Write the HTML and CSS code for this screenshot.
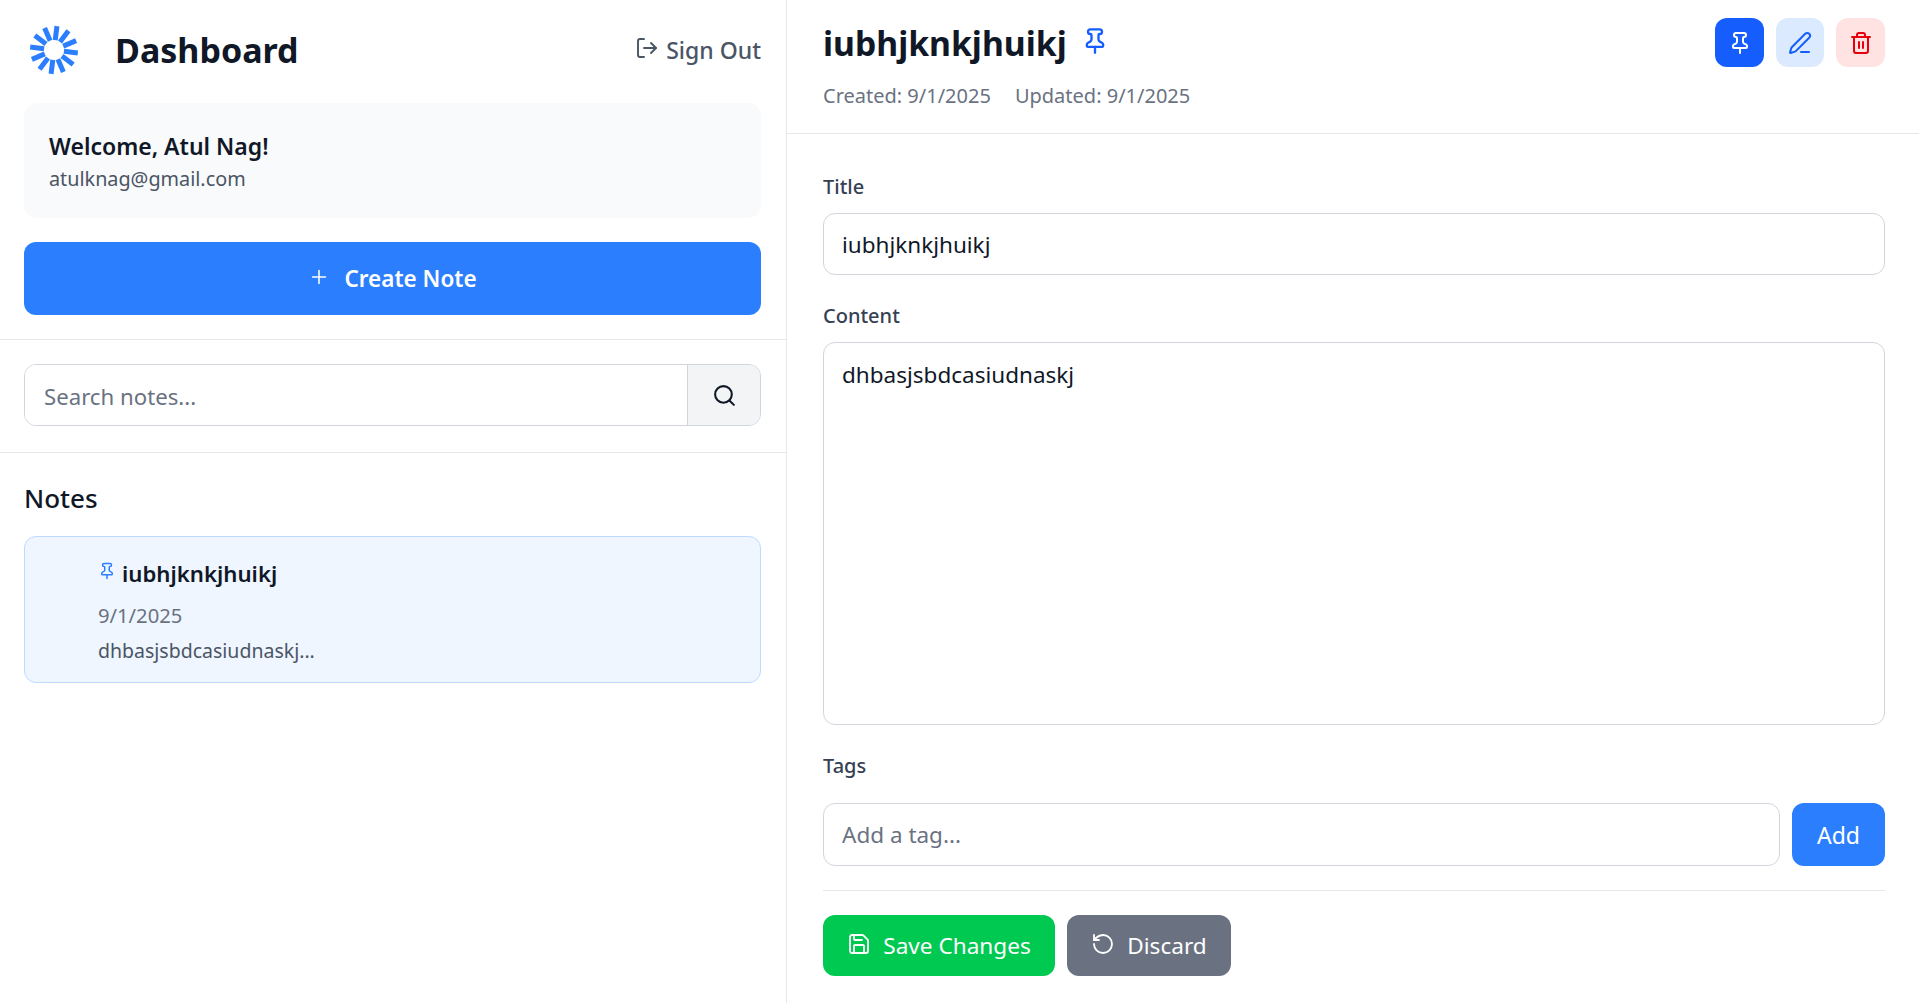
FILE: index.html
```html
<!DOCTYPE html>
<html lang="en">

<head>
    <meta charset="utf-8">
    <title>Dashboard</title>
    <link rel="stylesheet" href="styles.css">
</head>

<body>
    <div class="app">
        <aside class="sidebar">
            <section class="side-top">
                <div class="brand-row">
                    <svg class="logo" viewBox="0 0 50 50" fill="none" stroke="#2b7fff" stroke-width="5">
                        <path transform="rotate(7 25 25)" d="M25 1v14"/>
                        <path transform="rotate(37 25 25)" d="M25 1v14"/>
                        <path transform="rotate(67 25 25)" d="M25 1v14"/>
                        <path transform="rotate(97 25 25)" d="M25 1v14"/>
                        <path transform="rotate(127 25 25)" d="M25 1v14"/>
                        <path transform="rotate(157 25 25)" d="M25 1v14"/>
                        <path transform="rotate(187 25 25)" d="M25 1v14"/>
                        <path transform="rotate(217 25 25)" d="M25 1v14"/>
                        <path transform="rotate(247 25 25)" d="M25 1v14"/>
                        <path transform="rotate(277 25 25)" d="M25 1v14"/>
                        <path transform="rotate(307 25 25)" d="M25 1v14"/>
                        <path transform="rotate(337 25 25)" d="M25 1v14"/>
                    </svg>
                    <h1 class="brand">Dashboard</h1>
                    <a class="sign-out" href="#">
                        <svg class="icon" viewBox="0 0 24 24"><path d="M9 21H5a2 2 0 0 1-2-2V5a2 2 0 0 1 2-2h4"/><path d="m16 17 5-5-5-5"/><path d="M21 12H9"/></svg>
                        Sign Out
                    </a>
                </div>
                <div class="welcome">
                    <h2>Welcome, Atul Nag!</h2>
                    <p>atulknag@gmail.com</p>
                </div>
                <button class="btn btn-create">
                    <svg class="icon" viewBox="0 0 24 24"><path d="M5 12h14"/><path d="M12 5v14"/></svg>
                    Create Note
                </button>
            </section>

            <section class="side-search">
                <div class="search">
                    <input type="text" placeholder="Search notes...">
                    <button class="search-btn">
                        <svg class="icon" viewBox="0 0 24 24"><circle cx="11" cy="11" r="8"/><path d="m21 21-4.3-4.3"/></svg>
                    </button>
                </div>
            </section>

            <section class="side-notes">
                <h2>Notes</h2>
                <div class="note-card">
                    <div class="note-title">
                        <svg class="icon pin-small" viewBox="0 0 24 24"><path d="M12 17v5"/><path d="M9 10.76a2 2 0 0 1-1.11 1.79l-1.78.9A2 2 0 0 0 5 15.24V16a1 1 0 0 0 1 1h12a1 1 0 0 0 1-1v-.76a2 2 0 0 0-1.11-1.79l-1.78-.9A2 2 0 0 1 15 10.76V7a1 1 0 0 1 1-1 2 2 0 0 0 0-4H8a2 2 0 0 0 0 4 1 1 0 0 1 1 1z"/></svg>
                        iubhjknkjhuikj
                    </div>
                    <p class="note-date">9/1/2025</p>
                    <p class="note-text">dhbasjsbdcasiudnaskj...</p>
                </div>
            </section>
        </aside>

        <main class="editor">
            <header class="editor-head">
                <div>
                    <div class="editor-title">
                        <h1>iubhjknkjhuikj</h1>
                        <svg class="icon pin-big" viewBox="0 0 24 24"><path d="M12 17v5"/><path d="M9 10.76a2 2 0 0 1-1.11 1.79l-1.78.9A2 2 0 0 0 5 15.24V16a1 1 0 0 0 1 1h12a1 1 0 0 0 1-1v-.76a2 2 0 0 0-1.11-1.79l-1.78-.9A2 2 0 0 1 15 10.76V7a1 1 0 0 1 1-1 2 2 0 0 0 0-4H8a2 2 0 0 0 0 4 1 1 0 0 1 1 1z"/></svg>
                    </div>
                    <div class="dates">
                        <span>Created: 9/1/2025</span>
                        <span>Updated: 9/1/2025</span>
                    </div>
                </div>
                <div class="actions">
                    <button class="square pin-on">
                        <svg class="icon" viewBox="0 0 24 24"><path d="M12 17v5"/><path d="M9 10.76a2 2 0 0 1-1.11 1.79l-1.78.9A2 2 0 0 0 5 15.24V16a1 1 0 0 0 1 1h12a1 1 0 0 0 1-1v-.76a2 2 0 0 0-1.11-1.79l-1.78-.9A2 2 0 0 1 15 10.76V7a1 1 0 0 1 1-1 2 2 0 0 0 0-4H8a2 2 0 0 0 0 4 1 1 0 0 1 1 1z"/></svg>
                    </button>
                    <button class="square edit">
                        <svg class="icon" viewBox="0 0 24 24"><path d="M13 21h8"/><path d="M21.174 6.812a1 1 0 0 0-3.986-3.987L3.842 16.174a2 2 0 0 0-.5.83l-1.321 4.352a.5.5 0 0 0 .623.622l4.353-1.32a2 2 0 0 0 .83-.497z"/></svg>
                    </button>
                    <button class="square remove">
                        <svg class="icon" viewBox="0 0 24 24"><path d="M3 6h18"/><path d="M19 6v14c0 1-1 2-2 2H7c-1 0-2-1-2-2V6"/><path d="M8 6V4c0-1 1-2 2-2h4c1 0 2 1 2 2v2"/><path d="M10 11v6"/><path d="M14 11v6"/></svg>
                    </button>
                </div>
            </header>

            <form class="form">
                <label for="title">Title</label>
                <input class="field" id="title" type="text" value="iubhjknkjhuikj">

                <label for="content">Content</label>
                <textarea class="field" id="content">dhbasjsbdcasiudnaskj</textarea>

                <label for="tag">Tags</label>
                <div class="tag-row">
                    <input class="field" id="tag" type="text" placeholder="Add a tag...">
                    <button type="button" class="btn btn-add">Add</button>
                </div>

                <div class="form-actions">
                    <button type="button" class="btn btn-save">
                        <svg class="icon" viewBox="0 0 24 24"><path d="M15.2 3a2 2 0 0 1 1.4.6l3.8 3.8a2 2 0 0 1 .6 1.4V19a2 2 0 0 1-2 2H5a2 2 0 0 1-2-2V5a2 2 0 0 1 2-2z"/><path d="M17 21v-7a1 1 0 0 0-1-1H8a1 1 0 0 0-1 1v7"/><path d="M7 3v4a1 1 0 0 0 1 1h7"/></svg>
                        Save Changes
                    </button>
                    <button type="button" class="btn btn-discard">
                        <svg class="icon" viewBox="0 0 24 24"><path d="M3 12a9 9 0 1 0 9-9 9.75 9.75 0 0 0-6.74 2.74L3 8"/><path d="M3 3v5h5"/></svg>
                        Discard
                    </button>
                </div>
            </form>
        </main>
    </div>
</body>
</html>
```

FILE: styles.css
```css
* {
    margin: 0;
    padding: 0;
    box-sizing: border-box;
}

body {
    font-family: "Noto Sans", "Open Sans", sans-serif;
    color: #101828;
    background: #fff;
    overflow: hidden;
}

button,
input,
textarea {
    font: inherit;
    color: inherit;
}

.icon {
    width: 20px;
    height: 20px;
    fill: none;
    stroke: currentColor;
    stroke-width: 2;
    stroke-linecap: round;
    stroke-linejoin: round;
    flex: none;
}

.app {
    display: flex;
    height: 1003px;
}

/* left column */
.sidebar {
    width: 787px;
    flex: none;
    border-right: 1px solid #e5e7eb;
}

.side-top {
    padding: 0 25px 24px 24px;
    border-bottom: 1px solid #e5e7eb;
}

.brand-row {
    display: flex;
    align-items: center;
    height: 99px;
}

.logo {
    width: 50px;
    height: 50px;
    margin: 0 36px 0 5px;
}

.brand {
    font-size: 34px;
    font-weight: 700;
    flex: 1;
}

.sign-out {
    display: flex;
    align-items: center;
    gap: 7px;
    font-size: 23px;
    font-weight: 500;
    color: #4a5565;
    text-decoration: none;
}

.sign-out .icon {
    width: 24px;
    height: 24px;
    stroke-width: 1.9;
    margin-top: -4px;
}

.welcome {
    margin-top: 4px;
    height: 115px;
    padding: 27px 24px 0 25px;
    background: #f9fafb;
    border-radius: 13px;
}

.welcome h2 {
    font-size: 23px;
    font-weight: 600;
    line-height: 32px;
}

.welcome p {
    font-size: 19.8px;
    line-height: 30px;
    margin-top: 2px;
    color: #4a5565;
}

.btn {
    display: flex;
    align-items: center;
    justify-content: center;
    border: 0;
    border-radius: 12px;
    color: #fff;
    font-size: 23px;
    cursor: pointer;
}

.btn-create {
    width: 100%;
    height: 73px;
    margin-top: 24px;
    gap: 14px;
    background: #2b7fff;
    font-size: 22.5px;
    font-weight: 600;
}

.btn-create .icon {
    width: 22px;
    height: 22px;
    stroke-width: 1.7;
    margin-top: -3px;
}

.side-search {
    padding: 24px 25px 26px 24px;
    border-bottom: 1px solid #e5e7eb;
}

.search {
    display: flex;
    height: 62px;
    border: 1.5px solid #d1d5dc;
    border-radius: 12px;
    overflow: hidden;
}

.search input {
    flex: 1;
    min-width: 0;
    padding: 2px 18px 0 19px;
    border: 0;
    outline: 0;
    font-size: 22.2px;
}

input::placeholder {
    color: #6a7282;
    opacity: 1;
}

.search-btn {
    display: flex;
    align-items: center;
    justify-content: center;
    width: 73px;
    background: #f3f4f6;
    border: 0;
    border-left: 1px solid #d1d5dc;
}

.search-btn .icon {
    width: 25px;
    height: 25px;
    color: #101828;
}

.side-notes {
    padding: 27px 25px 30px 24px;
}

.side-notes h2 {
    font-size: 26px;
    font-weight: 500;
    line-height: 36px;
}

.note-card {
    height: 147px;
    margin-top: 20px;
    padding: 21px 24px 0 73px;
    background: #eff6ff;
    border: 1px solid #bedbff;
    border-radius: 12px;
}

.note-title {
    display: flex;
    align-items: center;
    gap: 6px;
    font-size: 22.2px;
    font-weight: 600;
    line-height: 32px;
}

.pin-small {
    width: 18px;
    height: 18px;
    color: #2b7fff;
    margin-top: -6px;
}

.note-date {
    margin-top: 12px;
    font-size: 20.2px;
    line-height: 26px;
    color: #6a7282;
}

.note-text {
    margin-top: 10px;
    font-size: 19.5px;
    line-height: 26px;
    color: #4a5565;
}

/* right column */
.editor {
    flex: 1;
    min-width: 0;
}

.editor-head {
    display: flex;
    justify-content: space-between;
    align-items: flex-start;
    height: 134px;
    padding: 18px 34px 0 36px;
    border-bottom: 1px solid #e5e7eb;
}

.editor-title {
    display: flex;
    align-items: center;
    gap: 14px;
    height: 50px;
}

.editor-title h1 {
    font-size: 33.7px;
    font-weight: 700;
}

.pin-big {
    width: 28px;
    height: 28px;
    color: #155dfc;
    margin-top: -4px;
}

.dates {
    display: flex;
    gap: 24px;
    margin-top: 14px;
    font-size: 20px;
    line-height: 28px;
    color: #6a7282;
}

.actions {
    display: flex;
    gap: 12px;
}

.square {
    display: flex;
    align-items: center;
    justify-content: center;
    width: 49px;
    height: 49px;
    border: 0;
    border-radius: 12px;
}

.square .icon {
    width: 24px;
    height: 24px;
}

.pin-on {
    background: #155dfc;
    color: #fff;
}

.edit {
    width: 48px;
    background: #dbeafe;
    color: #155dfc;
}

.remove {
    background: #ffe2e2;
    color: #e7000b;
}

.form {
    display: flex;
    flex-direction: column;
    padding: 38px 34px 0 36px;
}

.form label {
    font-size: 20px;
    font-weight: 500;
    line-height: 30px;
    color: #364153;
    margin-bottom: 11px;
}

.field {
    display: block;
    width: 100%;
    padding: 0 18px;
    border: 1px solid #d1d5dc;
    border-radius: 12px;
    outline: 0;
    font-size: 22.5px;
    background: #fff;
}

input.field {
    height: 63px;
}

#title {
    height: 62px;
    margin-bottom: 26px;
}

textarea.field {
    height: 383px;
    margin-bottom: 26px;
    padding-top: 16px;
    resize: none;
    line-height: 32px;
}

.form label[for="tag"] {
    margin-bottom: 22px;
}

.tag-row {
    display: flex;
    gap: 12px;
    padding-bottom: 24px;
    border-bottom: 1px solid #e5e7eb;
}

.btn-add {
    width: 93px;
    height: 63px;
    flex: none;
    background: #2b7fff;
}

.form-actions {
    display: flex;
    gap: 12px;
    margin-top: 24px;
}

.btn-save,
.btn-discard {
    height: 61px;
    gap: 12px;
    font-size: 22.6px;
}

.btn-save {
    width: 232px;
    background: #00c951;
}

.btn-discard {
    width: 164px;
    background: #6a7282;
}

.btn-save .icon,
.btn-discard .icon {
    width: 24px;
    height: 24px;
    stroke-width: 1.8;
    margin-top: -4px;
}
```
